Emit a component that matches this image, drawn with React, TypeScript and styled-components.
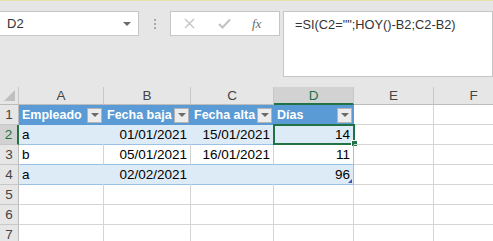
import styled, { createGlobalStyle, css } from "styled-components";

const GlobalStyle = createGlobalStyle`
    html, body {
        margin: 0;
        padding: 0;
        background: #e6e6e6;
        overflow: hidden;
    }
    body {
        font-family: "Liberation Sans", Arial, sans-serif;
    }
`;

const Page = styled.div`
    width: 493px;
    height: 241px;
    display: flex;
    flex-direction: column;
    overflow: hidden;
`;

const MessageStrip = styled.div`
    height: 3px;
    background: #fdf3b6;
    border-bottom: 1px solid #e9e2ad;
`;

const FormulaRow = styled.div`
    display: flex;
    align-items: flex-start;
    padding-top: 10px;
    height: 65px;
`;

const NameBox = styled.div`
    width: 139px;
    height: 25px;
    box-sizing: border-box;
    background: #fff;
    border: 1px solid #c6c6c6;
    border-left: none;
    display: flex;
    align-items: center;
    justify-content: space-between;
    padding: 0 7px 0 7px;
    font-size: 13px;
    color: #333;
`;

const DropArrow = styled.span`
    width: 0;
    height: 0;
    border-left: 4px solid transparent;
    border-right: 4px solid transparent;
    border-top: 4px solid #6a6a6a;
    margin-top: 1px;
`;

const Grip = styled.div`
    width: 31px;
    height: 25px;
    display: flex;
    flex-direction: column;
    align-items: center;
    justify-content: center;
    gap: 2px;
`;

const GripDot = styled.span`
    width: 2px;
    height: 2px;
    background: #a8a8a8;
`;

const ButtonBox = styled.div`
    width: 110px;
    height: 25px;
    box-sizing: border-box;
    background: #fff;
    border: 1px solid #c6c6c6;
    display: flex;
    align-items: center;
    padding-left: 13px;
    gap: 23px;
`;

const FxLabel = styled.span`
    font-family: "Liberation Serif", "Times New Roman", serif;
    font-style: italic;
    font-size: 13px;
    color: #6a6a6a;
    margin-left: -2px;
`;

const FormulaBox = styled.div`
    margin-left: 3px;
    width: 210px;
    height: 66px;
    box-sizing: border-box;
    background: #fff;
    border: 1px solid #c6c6c6;
    padding: 4px 0 0 11px;
    font-size: 12.8px;
    line-height: 18px;
    color: #333;
    white-space: nowrap;
`;

const Sheet = styled.div`
    margin-top: 11px;
    display: grid;
    grid-template-columns: 19px 85px 87px 83px 80px 80px 80px;
    grid-template-rows: 18px repeat(7, 20px);
    background: #fff;
`;

type Kind = "corner" | "col" | "row" | "th" | "band" | "plain" | "empty";

const Cell = styled.div<{
    $kind: Kind;
    $right?: boolean;
    $active?: boolean;
    $edge?: boolean;
}>`
    position: relative;
    box-sizing: border-box;
    display: flex;
    align-items: center;
    white-space: nowrap;
    overflow: visible;
    font-size: 13.5px;
    color: #000;
    padding: 0 3px;
    border-right: 1px solid #d4d4d4;
    border-bottom: 1px solid #d4d4d4;
    justify-content: ${(p) => (p.$right ? "flex-end" : "flex-start")};

    ${(p) =>
        (p.$kind === "col" || p.$kind === "corner") &&
        css`
            background: #e6e6e6;
            justify-content: center;
            color: #444;
            font-size: 13.5px;
            border-right: 1px solid #c8c8c8;
            border-bottom: 1px solid #bcbcbc;
        `}
    ${(p) =>
        p.$kind === "row" &&
        css`
            background: #e6e6e6;
            justify-content: center;
            color: #444;
            padding: 0;
            border-right: 1px solid #bcbcbc;
            border-bottom: 1px solid #c8c8c8;
        `}
    ${(p) =>
        p.$kind === "th" &&
        css`
            background: #5b9bd5;
            color: #fff;
            font-weight: bold;
            font-size: 12.5px;
            border-right: none;
            border-bottom: none;
            justify-content: space-between;
            padding: 0 2px 0 3px;
        `}
    ${(p) =>
        p.$kind === "band" &&
        css`
            background: #ddebf7;
            border-right: 1px solid #ddebf7;
            border-bottom: 1px solid #9bc2e6;
        `}
    ${(p) =>
        p.$kind === "plain" &&
        css`
            border-bottom: 1px solid #9bc2e6;
        `}
    ${(p) =>
        p.$edge &&
        css`
            border-right: 1px solid #9bc2e6;
        `}
    ${(p) =>
        p.$active &&
        (p.$kind === "col"
            ? css`
                  background: #d2d2d2;
                  color: #217346;
                  border-bottom: 2px solid #217346;
              `
            : css`
                  background: #d2d2d2;
                  color: #217346;
                  border-right: 2px solid #217346;
              `)}
`;

const CornerMark = styled.span`
    position: absolute;
    right: 3px;
    bottom: 3px;
    width: 0;
    height: 0;
    border-left: 11px solid transparent;
    border-bottom: 11px solid #bfbfbf;
`;

const FilterButton = styled.span`
    width: 15px;
    height: 15px;
    box-sizing: border-box;
    background: #ececec;
    border: 1px solid #b4b4b4;
    display: flex;
    align-items: center;
    justify-content: center;
    flex-shrink: 0;
    &::after {
        content: "";
        border-left: 4px solid transparent;
        border-right: 4px solid transparent;
        border-top: 4px solid #6a6a6a;
    }
`;

const Selection = styled.span`
    position: absolute;
    left: -1px;
    top: -1px;
    right: -2px;
    bottom: -1px;
    border: 2px solid #217346;
    pointer-events: none;
`;

const FillHandle = styled.span`
    position: absolute;
    right: -5px;
    bottom: -4px;
    width: 5px;
    height: 5px;
    background: #217346;
    border: 1px solid #fff;
`;

const ResizeHandle = styled.span`
    position: absolute;
    right: 1px;
    bottom: 1px;
    width: 0;
    height: 0;
    border-left: 4px solid transparent;
    border-bottom: 4px solid #3f51b5;
`;

const CloseIcon = () => (
    <svg width="11" height="11" viewBox="0 0 11 11">
        <path d="M1 1 L10 10 M10 1 L1 10" stroke="#c2c2c2" strokeWidth="1.3" fill="none" />
    </svg>
);

const CheckIcon = () => (
    <svg width="13" height="11" viewBox="0 0 13 11">
        <path d="M1 6 L4.5 9.5 L12 1.5" stroke="#c2c2c2" strokeWidth="2" fill="none" />
    </svg>
);

const columns = ["A", "B", "C", "D", "E", "F"];

const headers = ["Empleado", "Fecha baja", "Fecha alta", "Días"];

const rows = [
    ["a", "01/01/2021", "15/01/2021", "14"],
    ["b", "05/01/2021", "16/01/2021", "11"],
    ["a", "02/02/2021", "", "96"],
];

const App = () => {
    return (
        <Page>
            <GlobalStyle />
            <MessageStrip />
            <FormulaRow>
                <NameBox>
                    D2
                    <DropArrow />
                </NameBox>
                <Grip>
                    <GripDot />
                    <GripDot />
                    <GripDot />
                </Grip>
                <ButtonBox>
                    <CloseIcon />
                    <CheckIcon />
                    <FxLabel>fx</FxLabel>
                </ButtonBox>
                <FormulaBox>=SI(C2="";HOY()-B2;C2-B2)</FormulaBox>
            </FormulaRow>
            <Sheet>
                <Cell $kind="corner">
                    <CornerMark />
                </Cell>
                {columns.map((c) => (
                    <Cell key={c} $kind="col" $active={c === "D"}>
                        {c}
                    </Cell>
                ))}

                <Cell $kind="row">1</Cell>
                {headers.map((h) => (
                    <Cell key={h} $kind="th">
                        {h}
                        <FilterButton />
                    </Cell>
                ))}
                <Cell $kind="empty" />
                <Cell $kind="empty" />

                {rows.map((r, i) => {
                    const kind: Kind = i % 2 === 0 ? "band" : "plain";
                    return [
                        <Cell key={`r${i}`} $kind="row" $active={i === 0}>
                            {i + 2}
                        </Cell>,
                        ...r.map((v, j) => (
                            <Cell
                                key={`c${i}-${j}`}
                                $kind={kind}
                                $right={j > 0}
                                $edge={j === 3}
                            >
                                {v}
                                {i === 0 && j === 3 && (
                                    <Selection>
                                        <FillHandle />
                                    </Selection>
                                )}
                                {i === 2 && j === 3 && <ResizeHandle />}
                            </Cell>
                        )),
                        <Cell key={`e${i}`} $kind="empty" />,
                        <Cell key={`f${i}`} $kind="empty" />,
                    ];
                })}

                {[5, 6, 7].map((n) => [
                    <Cell key={`r${n}`} $kind="row">
                        {n}
                    </Cell>,
                    ...columns.map((c) => <Cell key={`${n}${c}`} $kind="empty" />),
                ])}
            </Sheet>
        </Page>
    );
};

export default App;
